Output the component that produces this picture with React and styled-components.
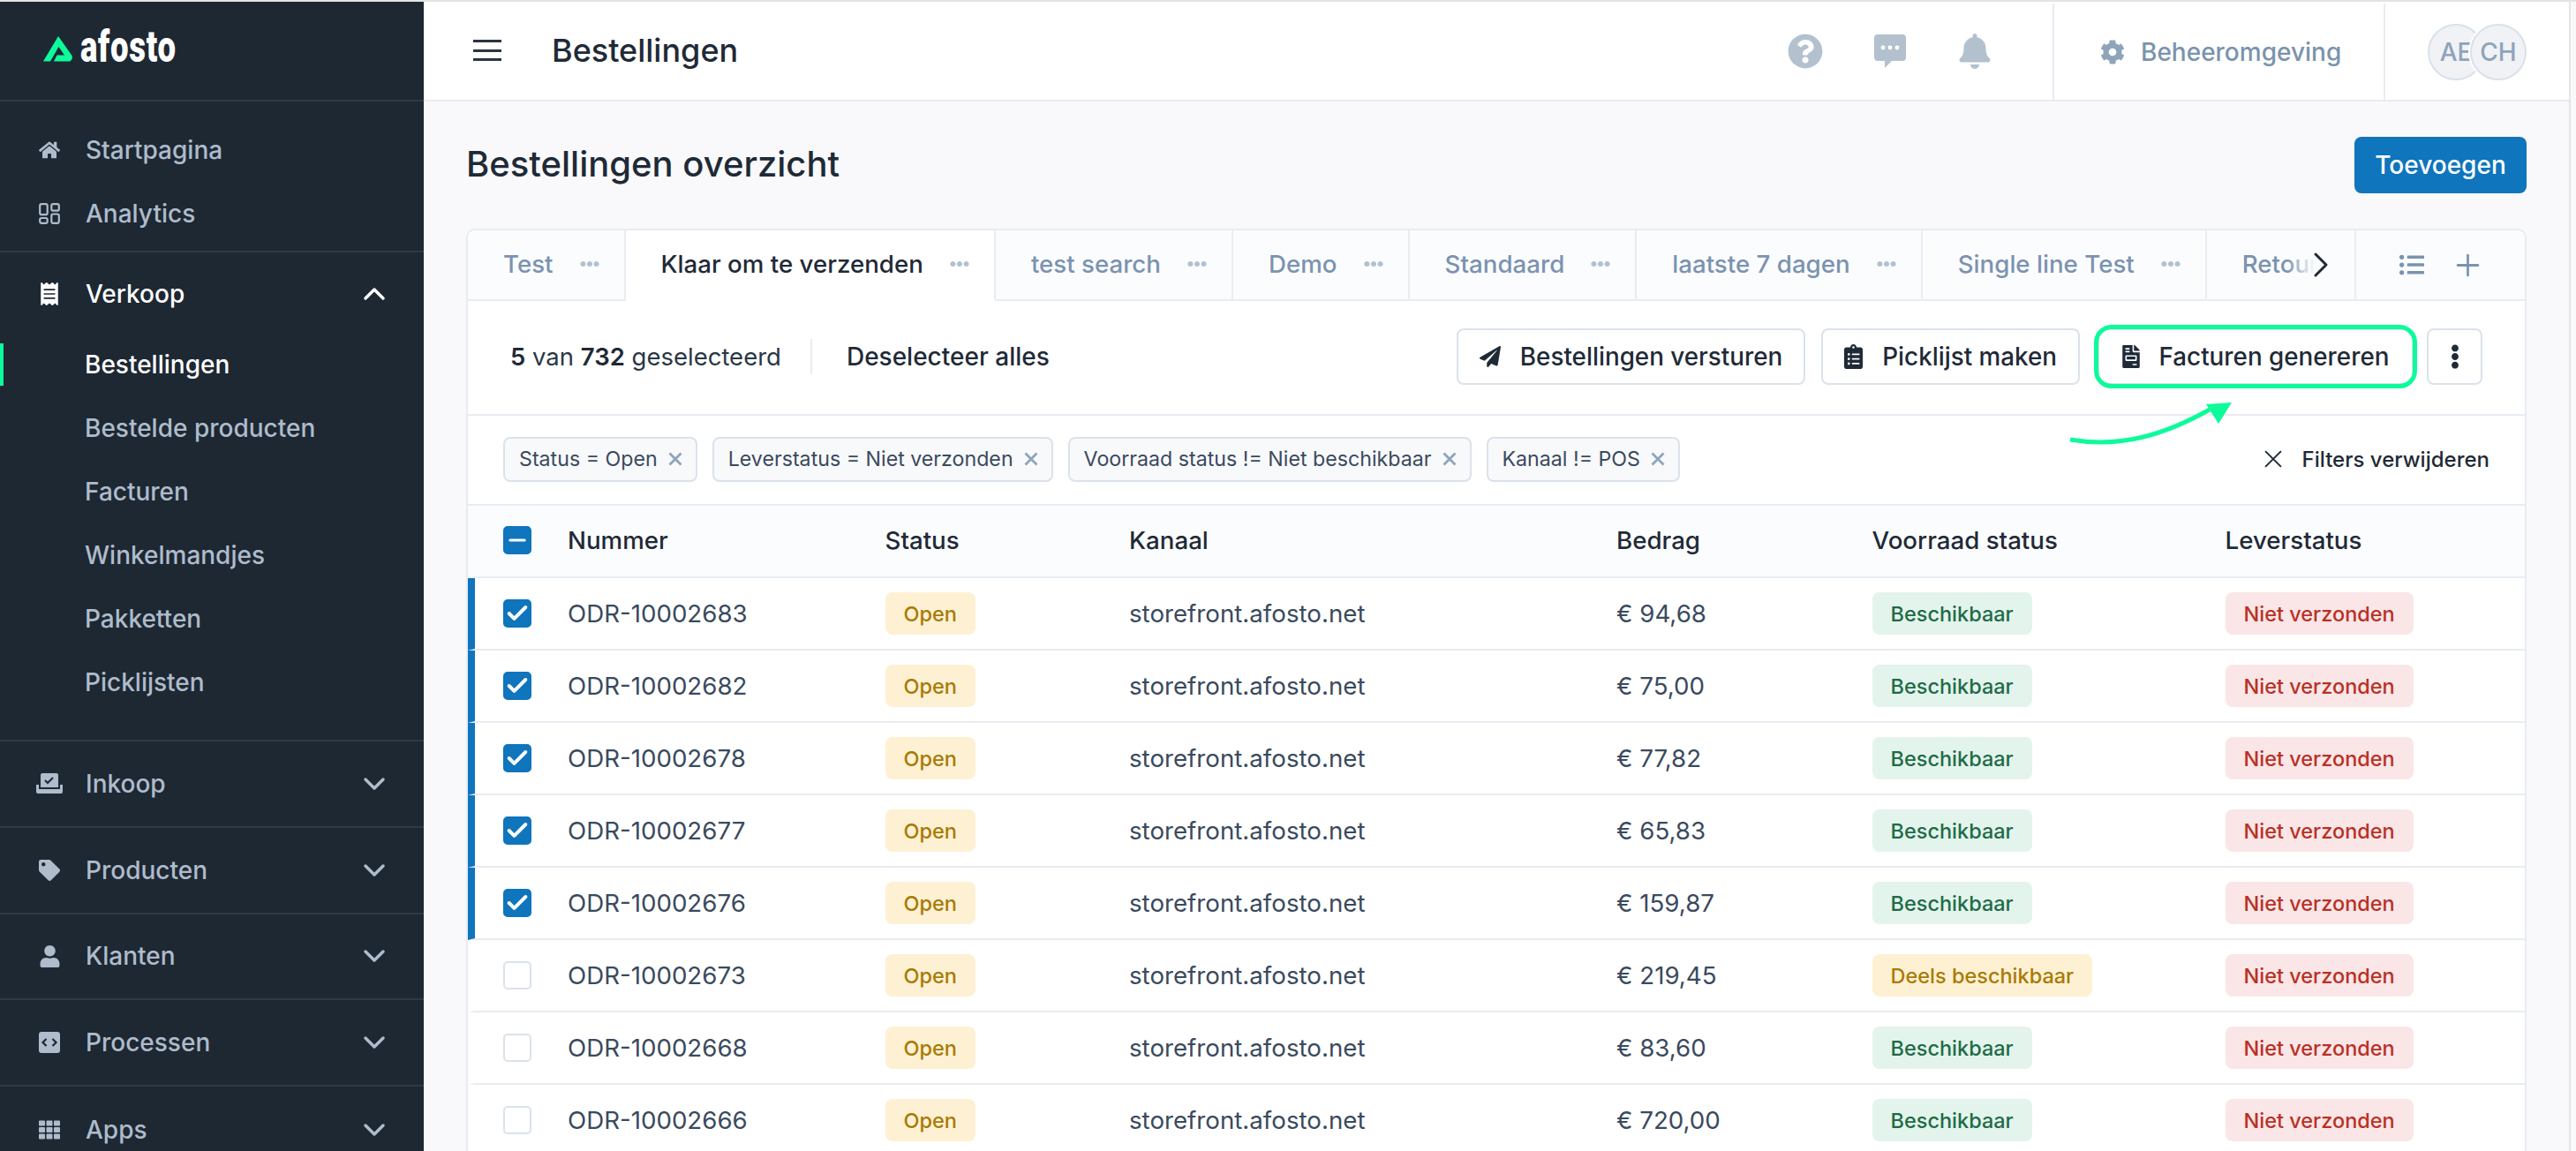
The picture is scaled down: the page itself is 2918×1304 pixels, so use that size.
import React from 'react'
import styled, { createGlobalStyle, css } from 'styled-components'
import {
  FaHome,
  FaReceipt,
  FaTag,
  FaUser,
  FaTh,
  FaQuestionCircle,
  FaBell,
  FaCog,
  FaPaperPlane,
  FaClipboardList,
  FaFileInvoice,
  FaEllipsisV,
  FaEllipsisH,
  FaListUl,
} from 'react-icons/fa'
import { ChevronDown, ChevronUp, ChevronRight, Plus, Check, Minus } from 'lucide-react'

const GlobalStyle = createGlobalStyle`
  * {
    box-sizing: border-box;
  }
  html, body {
    margin: 0;
    height: 100%;
    overflow: hidden;
    background: #f9f9fb;
    font-family: Inter, "Noto Sans", sans-serif;
    color: #1f2a37;
  }
`

const Shell = styled.div`
  display: flex;
  height: 1304px;
  width: 2918px;
  border-top: 2px solid #e4e4e4;
`

const Sidebar = styled.aside`
  width: 480px;
  flex: none;
  background: #1e2833;
  overflow: hidden;
`

const LogoBar = styled.div`
  height: 113px;
  padding: 16px 0 0 46px;
  display: flex;
  align-items: flex-start;
  gap: 7px;
  border-bottom: 2px solid #2f3a47;
`

const LogoText = styled.span`
  font-family: Roboto, sans-serif;
  font-weight: 900;
  font-size: 50px;
  line-height: 66px;
  margin-top: 2px;
  color: #fff;
  display: inline-block;
  transform: scaleX(0.73);
  transform-origin: left center;
  letter-spacing: 1px;
`

const NavSection = styled.div`
  padding: ${(p) => p.$pad || '0'};
  border-bottom: 2px solid #2f3a47;
`

const NavItem = styled.div`
  position: relative;
  height: 72px;
  padding: 0 36px 0 40px;
  display: flex;
  align-items: center;
  font-size: 28px;
  font-weight: 500;
  color: ${(p) => (p.$active ? '#ffffff' : '#aebccb')};
`

const NavIcon = styled.span`
  width: 32px;
  margin-right: 25px;
  display: flex;
  justify-content: center;
  font-size: 25px;
`

const NavLabel = styled.span`
  flex: 1;
`

const SubList = styled.div`
  padding-top: 8px;
`

const SubItem = styled.div`
  position: relative;
  height: 72px;
  padding-left: 96px;
  display: flex;
  align-items: center;
  font-size: 28px;
  font-weight: 500;
  color: ${(p) => (p.$active ? '#ffffff' : '#aebccb')};
  ${(p) =>
    p.$active &&
    css`
      &::before {
        content: '';
        position: absolute;
        left: 0;
        top: 12px;
        width: 4px;
        height: 48px;
        background: #0dfb9a;
      }
    `}
`

const Group = styled.div`
  height: 97.75px;
  padding: 0 36px 0 40px;
  display: flex;
  align-items: center;
  font-size: 28px;
  font-weight: 500;
  color: #aebccb;
  border-bottom: 2px solid #2f3a47;
  &:last-child {
    border-bottom: 0;
  }
`

const Main = styled.main`
  width: 2432px;
  flex: none;
  border-right: 2px solid #e4e4e4;
  display: flex;
  flex-direction: column;
  overflow: hidden;
`

const Header = styled.header`
  height: 113px;
  flex: none;
  background: #fff;
  border-bottom: 2px solid #e8ecf2;
  display: flex;
  align-items: stretch;
`

const Burger = styled.button`
  width: 32px;
  height: 24px;
  margin: 43px 57px 0 56px;
  padding: 0;
  border: 0;
  background: none;
  display: flex;
  flex-direction: column;
  justify-content: space-between;
  span {
    display: block;
    height: 3px;
    background: #2a3441;
  }
`

const HeaderTitle = styled.div`
  flex: 1;
  font-size: 36px;
  font-weight: 500;
  line-height: 111px;
`

const HeaderIcons = styled.div`
  display: flex;
  align-items: center;
  gap: 58px;
  padding-right: 68px;
  color: #b3c1cf;
`

const HeaderCell = styled.div`
  display: flex;
  align-items: center;
  margin-top: 2px;
  border-left: 2px solid #e8ecf2;
  width: ${(p) => p.$w};
  padding-left: ${(p) => p.$pl};
`

const SettingsLink = styled.span`
  margin-left: 18px;
  font-size: 28px;
  font-weight: 500;
  color: #7b93ad;
`

const Avatar = styled.span`
  width: 64px;
  height: 64px;
  flex: none;
  border-radius: 50%;
  background: #f0f2f6;
  border: 2px solid #d9e1e9;
  box-shadow: 0 0 0 2px #fff;
  color: #8ea4bb;
  font-size: 28px;
  font-weight: 500;
  display: flex;
  align-items: center;
  justify-content: center;
  overflow: hidden;
  & + & {
    margin-left: -16px;
  }
`

const Content = styled.div`
  padding: 40px 48px 0;
`

const TitleRow = styled.div`
  display: flex;
  align-items: center;
  justify-content: space-between;
  margin-bottom: 40px;
`

const PageTitle = styled.h1`
  margin: 0 0 4px;
  font-size: 40px;
  font-weight: 500;
`

const PrimaryButton = styled.button`
  height: 64px;
  width: 195px;
  border: 0;
  border-radius: 8px;
  background: #0f75bc;
  color: #fff;
  font-family: inherit;
  font-size: 28px;
  font-weight: 500;
`

const Card = styled.section`
  position: relative;
  background: #fff;
  border: 2px solid #e8ecf2;
  border-bottom: 0;
  border-radius: 10px 10px 0 0;
`

const TabBar = styled.div`
  display: flex;
  height: 80px;
  background: #fbfcfe;
  border-radius: 10px 10px 0 0;
  overflow: hidden;
`

const TabScroll = styled.div`
  position: relative;
  flex: 1;
  min-width: 0;
  display: flex;
  overflow: hidden;
`

const Tab = styled.div`
  flex: none;
  display: flex;
  align-items: center;
  gap: 30px;
  padding: 0 ${(p) => p.$pr || 28}px 2px 40px;
  font-size: 27.7px;
  font-weight: 500;
  color: ${(p) => (p.$active ? '#1f2a37' : '#7b93b0')};
  background: ${(p) => (p.$active ? '#fff' : 'transparent')};
  border-right: 2px solid #e8ecf2;
  border-bottom: 2px solid ${(p) => (p.$active ? '#fff' : '#e8ecf2')};
`

const TabDots = styled(FaEllipsisH)`
  color: #b3c1cf;
  font-size: 22px;
`

const TabFade = styled.div`
  position: absolute;
  right: 0;
  top: 0;
  bottom: 2px;
  width: 77px;
  background: linear-gradient(to right, rgba(251, 252, 254, 0), #fbfcfe 42%);
  display: flex;
  align-items: center;
  justify-content: flex-end;
  padding-right: 14px;
  color: #1f2a37;
`

const TabActions = styled.div`
  width: 193px;
  flex: none;
  display: flex;
  align-items: center;
  gap: 30px;
  padding-left: 49px;
  color: #7b93b0;
  border-left: 2px solid #e8ecf2;
  border-bottom: 2px solid #e8ecf2;
`

const SelectionBar = styled.div`
  height: 130px;
  display: flex;
  align-items: center;
  padding: 0 48px 2px;
  border-bottom: 2px solid #e8ecf2;
  font-size: 28px;
`

const SelectionCount = styled.span`
  color: #2b3745;
  font-size: 27.5px;
  b {
    font-weight: 600;
    color: #1f2a37;
  }
`

const Deselect = styled.span`
  margin-left: 33px;
  padding-left: 39px;
  border-left: 2px solid #e8ecf2;
  font-weight: 500;
  line-height: 40px;
  flex: 1;
`

const OutlineButton = styled.button`
  flex: none;
  white-space: nowrap;
  height: 64px;
  padding: 0 ${(p) => (p.$square || p.$highlight ? '0' : '24px')};
  width: ${(p) => (p.$square ? '63px' : p.$highlight ? '358px' : 'auto')};
  margin-left: ${(p) => (p.$square ? '15px' : p.$highlight ? '20px' : '18px')};
  display: flex;
  align-items: center;
  justify-content: center;
  gap: 22px;
  background: #fff;
  border: 2px solid #dbe2ea;
  border-radius: 8px;
  color: #1f2a37;
  font-family: inherit;
  font-size: 27.8px;
  font-weight: 500;
  ${(p) =>
    p.$highlight &&
    css`
      position: relative;
      &::after {
        content: '';
        position: absolute;
        inset: -6px;
        border: 5px solid #0dfb9a;
        border-radius: 20px;
      }
    `}
`

const PicklistIcon = styled(FaClipboardList)`
  width: 21px;
  height: 28px;
`

const InvoiceIcon = styled(FaFileInvoice)`
  width: 20px;
  height: 26px;
`

const FilterBar = styled.div`
  height: 102px;
  display: flex;
  align-items: center;
  gap: 17px;
  padding: 0 40px 2px;
  border-bottom: 2px solid #e8ecf2;
`

const Chip = styled.span`
  height: 51px;
  display: flex;
  align-items: center;
  gap: 12px;
  padding: 0 15px 0 16px;
  background: #f8f9fb;
  border: 2px solid #dbe2ea;
  border-radius: 8px;
  font-size: 23.2px;
  color: #3a4a5e;
  svg {
    color: #8ea4bb;
  }
`

const ClearFilters = styled.span`
  margin-left: auto;
  display: flex;
  align-items: center;
  gap: 22px;
  font-size: 24px;
  font-weight: 500;
`

const Row = styled.div`
  display: grid;
  grid-template-columns: 105px 359.5px 276.5px 552px 289.5px 400px 1fr;
  align-items: center;
  height: 82px;
  padding-bottom: ${(p) => (p.$head ? '3px' : '0')};
  border-left: 8px solid ${(p) => (p.$head ? '#fbfcfe' : p.$selected ? '#0f75bc' : '#fff')};
  border-bottom: 2px solid #e8ecf2;
  background: ${(p) => (p.$head ? '#fbfcfe' : '#fff')};
  font-size: 27.7px;
  font-weight: ${(p) => (p.$head ? 500 : 400)};
  color: ${(p) => (p.$head ? '#1f2a37' : '#3a4a5e')};
`

const CheckBox = styled.span`
  width: 32px;
  height: 32px;
  margin-left: 32px;
  display: flex;
  align-items: center;
  justify-content: center;
  border-radius: 5px;
  color: #fff;
  background: ${(p) => (p.$on ? '#0f75bc' : '#fff')};
  border: 2px solid ${(p) => (p.$on ? '#0f75bc' : '#dbe2ea')};
`

const badgeColors = {
  yellow: css`
    background: #fef1d3;
    color: #a87b05;
  `,
  green: css`
    background: #e3f4ec;
    color: #1f6b47;
  `,
  red: css`
    background: #fae6e7;
    color: #b93126;
  `,
}

const Badge = styled.span`
  justify-self: start;
  height: 48px;
  display: inline-flex;
  align-items: center;
  padding: 0 21px;
  border-radius: 8px;
  font-size: 23.5px;
  font-weight: 500;
  ${(p) => badgeColors[p.$tone]}
`

const Arrow = styled.svg`
  position: absolute;
  left: 1813px;
  top: 195px;
  width: 190px;
  height: 50px;
  overflow: visible;
`

function LogoMark() {
  return (
    <svg width="38" height="34" viewBox="46 38 38 34" style={{ marginTop: 20 }}>
      <path
        fill="#0dfb9a"
        d="M66 41 L81.5 63 Q83 67 79 69.5 L61 69.5 L64.5 62.5 L73 62.5 L66.5 53 L57 69.5 L49 69.5 Z"
      />
    </svg>
  )
}

function AnalyticsIcon() {
  return (
    <svg width="24" height="24" viewBox="0 0 24 24" fill="none" stroke="currentColor" strokeWidth="2.2">
      <rect x="1.2" y="1.2" width="8.5" height="12" rx="2" />
      <rect x="14.3" y="1.2" width="8.5" height="7.5" rx="2" />
      <rect x="1.2" y="17" width="8.5" height="5.8" rx="2" />
      <rect x="14.3" y="12.5" width="8.5" height="10.3" rx="2" />
    </svg>
  )
}

function InboxIcon() {
  return (
    <svg width="30" height="24" viewBox="0 0 30 24" fill="currentColor">
      <path d="M7 0h16a2 2 0 0 1 2 2v14H5V2a2 2 0 0 1 2-2z" />
      <path d="M10 8l3 3 6-6" fill="none" stroke="#1e2833" strokeWidth="2" />
      <path d="M0 13h3v5h24v-5h3v8a2 2 0 0 1-2 2H2a2 2 0 0 1-2-2z" />
    </svg>
  )
}

function CodeIcon() {
  return (
    <svg width="24" height="24" viewBox="0 0 24 24" fill="currentColor">
      <path d="M3 0h18a3 3 0 0 1 3 3v18a3 3 0 0 1-3 3H3a3 3 0 0 1-3-3V3a3 3 0 0 1 3-3z" />
      <path d="M8.5 8L4.5 12l4 4M15.5 8l4 4-4 4" fill="none" stroke="#1e2833" strokeWidth="2.2" />
    </svg>
  )
}

function ChatIcon() {
  return (
    <svg width="36" height="38" viewBox="0 0 36 38" fill="currentColor">
      <path d="M4 0h28a4 4 0 0 1 4 4v22a4 4 0 0 1-4 4H20l-8 8v-8H4a4 4 0 0 1-4-4V4a4 4 0 0 1 4-4z" />
      <circle cx="10" cy="15" r="2.4" fill="#fff" />
      <circle cx="18" cy="15" r="2.4" fill="#fff" />
      <circle cx="26" cy="15" r="2.4" fill="#fff" />
    </svg>
  )
}

function CloseIcon({ size, weight }) {
  return (
    <svg width={size} height={size} viewBox="0 0 16 16" fill="none" stroke="currentColor" strokeWidth={weight}>
      <path d="M1.5 1.5l13 13M14.5 1.5l-13 13" />
    </svg>
  )
}

const verkoopItems = ['Bestellingen', 'Bestelde producten', 'Facturen', 'Winkelmandjes', 'Pakketten', 'Picklijsten']

const groups = [
  ['Inkoop', <InboxIcon />],
  ['Producten', <FaTag size={24} />],
  ['Klanten', <FaUser />],
  ['Processen', <CodeIcon />],
  ['Apps', <FaTh size={24} />],
]

const tabs = [
  ['Test'],
  ['Klaar om te verzenden', true],
  ['test search'],
  ['Demo'],
  ['Standaard'],
  ['laatste 7 dagen'],
  ['Single line Test'],
]

const filters = ['Status = Open', 'Leverstatus = Niet verzonden', 'Voorraad status != Niet beschikbaar', 'Kanaal != POS']

const orders = [
  ['ODR-10002683', '€ 94,68', true],
  ['ODR-10002682', '€ 75,00', true],
  ['ODR-10002678', '€ 77,82', true],
  ['ODR-10002677', '€ 65,83', true],
  ['ODR-10002676', '€ 159,87', true],
  ['ODR-10002673', '€ 219,45', false, true],
  ['ODR-10002668', '€ 83,60', false],
  ['ODR-10002666', '€ 720,00', false],
]

export default function App() {
  return (
    <>
      <GlobalStyle />
      <Shell>
        <Sidebar>
          <LogoBar>
            <LogoMark />
            <LogoText>afosto</LogoText>
          </LogoBar>
          <NavSection $pad="19px 0 6px">
            <NavItem>
              <NavIcon><FaHome size={24} /></NavIcon>
              <NavLabel>Startpagina</NavLabel>
            </NavItem>
            <NavItem>
              <NavIcon><AnalyticsIcon /></NavIcon>
              <NavLabel>Analytics</NavLabel>
            </NavItem>
          </NavSection>
          <NavSection $pad="11px 0 29px">
            <NavItem $active>
              <NavIcon><FaReceipt size={26} /></NavIcon>
              <NavLabel>Verkoop</NavLabel>
              <ChevronUp size={40} strokeWidth={2.1} />
            </NavItem>
            <SubList>
              {verkoopItems.map((label, i) => (
                <SubItem key={label} $active={i === 0}>{label}</SubItem>
              ))}
            </SubList>
          </NavSection>
          {groups.map(([label, icon]) => (
            <Group key={label}>
              <NavIcon>{icon}</NavIcon>
              <NavLabel>{label}</NavLabel>
              <ChevronDown size={40} strokeWidth={2.1} />
            </Group>
          ))}
        </Sidebar>
        <Main>
          <Header>
            <Burger><span /><span /><span /></Burger>
            <HeaderTitle>Bestellingen</HeaderTitle>
            <HeaderIcons>
              <FaQuestionCircle size={40} />
              <ChatIcon />
              <FaBell size={40} />
            </HeaderIcons>
            <HeaderCell $w="375px" $pl="52px">
              <FaCog size={28} color="#8ea4bb" />
              <SettingsLink>Beheeromgeving</SettingsLink>
            </HeaderCell>
            <HeaderCell $w="210px" $pl="48px">
              <Avatar>AE</Avatar>
              <Avatar>CH</Avatar>
            </HeaderCell>
          </Header>
          <Content>
            <TitleRow>
              <PageTitle>Bestellingen overzicht</PageTitle>
              <PrimaryButton>Toevoegen</PrimaryButton>
            </TitleRow>
            <Card>
              <TabBar>
                <TabScroll>
                  {tabs.map(([label, active]) => (
                    <Tab key={label} $active={active}>
                      {label}
                      <TabDots />
                    </Tab>
                  ))}
                  <Tab $pr={60}>Retour</Tab>
                  <TabFade><ChevronRight size={48} strokeWidth={1.5} /></TabFade>
                </TabScroll>
                <TabActions>
                  <FaListUl size={28} />
                  <Plus size={39} strokeWidth={1.7} />
                </TabActions>
              </TabBar>
              <SelectionBar>
                <SelectionCount><b>5</b> van <b>732</b> geselecteerd</SelectionCount>
                <Deselect>Deselecteer alles</Deselect>
                <OutlineButton><FaPaperPlane size={24} />Bestellingen versturen</OutlineButton>
                <OutlineButton><PicklistIcon />Picklijst maken</OutlineButton>
                <OutlineButton $highlight><InvoiceIcon />Facturen genereren</OutlineButton>
                <OutlineButton $square><FaEllipsisV size={28} /></OutlineButton>
              </SelectionBar>
              <FilterBar>
                {filters.map((label) => (
                  <Chip key={label}>{label}<CloseIcon size={16} weight={2.8} /></Chip>
                ))}
                <ClearFilters><CloseIcon size={22} weight={1.4} />Filters verwijderen</ClearFilters>
              </FilterBar>
              <Row $head>
                <CheckBox $on><Minus size={30} strokeWidth={2.6} /></CheckBox>
                <span>Nummer</span>
                <span>Status</span>
                <span>Kanaal</span>
                <span>Bedrag</span>
                <span>Voorraad status</span>
                <span>Leverstatus</span>
              </Row>
              {orders.map(([number, amount, selected, partial]) => (
                <Row key={number} $selected={selected}>
                  <CheckBox $on={selected}>{selected && <Check size={28} strokeWidth={3.4} />}</CheckBox>
                  <span>{number}</span>
                  <Badge $tone="yellow">Open</Badge>
                  <span>storefront.afosto.net</span>
                  <span>{amount}</span>
                  <Badge $tone={partial ? 'yellow' : 'green'}>{partial ? 'Deels beschikbaar' : 'Beschikbaar'}</Badge>
                  <Badge $tone="red">Niet verzonden</Badge>
                </Row>
              ))}
              <Arrow viewBox="0 0 190 50">
                <path d="M2 42 C60 52 110 36 160 8" fill="none" stroke="#0dfb9a" strokeWidth="5" />
                <path d="M156 2 L185 0 L170 24 Z" fill="#0dfb9a" />
              </Arrow>
            </Card>
          </Content>
        </Main>
      </Shell>
    </>
  )
}
